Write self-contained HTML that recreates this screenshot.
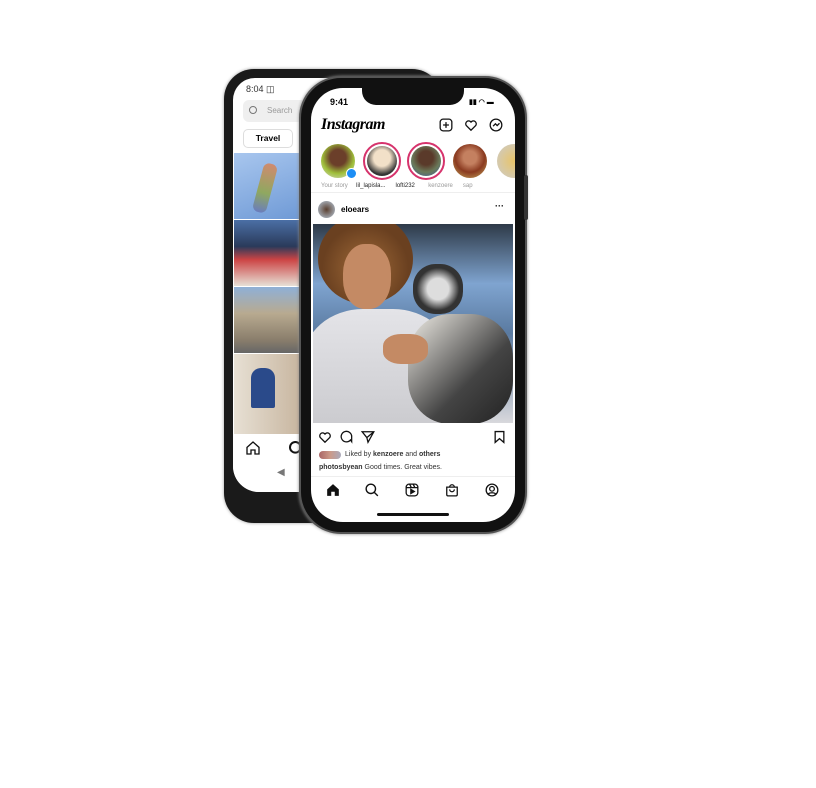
<!DOCTYPE html>
<html><head><style>
*{margin:0;padding:0;box-sizing:border-box}
body{width:816px;height:788px;background:#fff;position:relative;overflow:hidden;font-family:"Liberation Sans",sans-serif}
.abs{position:absolute}
</style></head><body>
<!-- back phone -->
<div class="abs" style="left:224px;top:69px;width:218px;height:454px;background:#1a1a1a;border-radius:30px;box-shadow:0 0 3px #999"></div>
<div class="abs" style="left:233px;top:78px;width:200px;height:414px;background:#fff;border-radius:22px 22px 26px 26px;overflow:hidden">
 <div class="abs" style="left:13px;top:6px;font-size:9px;color:#333">8:04 ◫</div>
 <div class="abs" style="left:10px;top:22px;width:190px;height:22px;background:#efefef;border-radius:6px;font-size:8px;color:#999;padding:6px 0 0 24px">Search</div>
 <div class="abs" style="left:16px;top:28px;width:8px;height:8px;border:1.5px solid #777;border-radius:50%"></div>
 <div class="abs" style="left:10px;top:51px;width:50px;height:19px;border:1px solid #ddd;border-radius:5px;font-size:8.5px;font-weight:bold;text-align:center;line-height:17px">Travel</div>
 <div class="abs" style="left:1px;top:75px;width:66px;height:66px;background:linear-gradient(160deg,#a8c6ee,#6f9ad6)"></div>
 <div class="abs" style="left:25px;top:85px;width:14px;height:50px;background:linear-gradient(#d08a70,#8fa860 60%,#6a7dbd);border-radius:6px;transform:rotate(15deg)"></div>
 <div class="abs" style="left:1px;top:142px;width:66px;height:66px;background:linear-gradient(#4b6fa5,#2a3a5a 40%,#c44 60%,#e6e0d6)"></div>
 <div class="abs" style="left:1px;top:209px;width:66px;height:66px;background:linear-gradient(#8fb0d6,#b8aa90 40%,#8a7e6c 80%,#666)"></div>
 <div class="abs" style="left:1px;top:276px;width:66px;height:80px;background:linear-gradient(90deg,#e7e0d4,#c8b6a0);"></div>
 <div class="abs" style="left:18px;top:290px;width:24px;height:40px;background:#2a4a8a;border-radius:10px 10px 2px 2px"></div>
 <div class="abs" style="left:0;top:357px;width:200px;height:60px;background:#fff"></div>
 <svg class="abs" style="left:12px;top:362px" width="16" height="16" viewBox="0 0 24 24" fill="none" stroke="#111" stroke-width="2"><path d="M3 11l9-8 9 8v10h-6v-6h-6v6H3z"/></svg>
 <svg class="abs" style="left:55px;top:362px" width="16" height="16" viewBox="0 0 24 24" fill="none" stroke="#111" stroke-width="3"><circle cx="11" cy="11" r="8"/></svg>
 <div class="abs" style="left:44px;top:389px;font-size:10px;color:#777">◀</div>
</div>
<!-- front phone -->
<div class="abs" style="left:299px;top:76px;width:228px;height:458px;background:#111;border-radius:42px;border:2px solid #555;box-shadow:0 0 3px #888"></div>
<div class="abs" style="left:524px;top:175px;width:4px;height:45px;background:#333;border-radius:2px"></div>
<div class="abs" style="left:311px;top:88px;width:204px;height:434px;background:#fff;border-radius:32px;overflow:hidden">
 <div class="abs" style="left:51px;top:0;width:102px;height:17px;background:#111;border-radius:0 0 14px 14px"></div>
 <div class="abs" style="left:19px;top:9px;font-size:9px;font-weight:bold">9:41</div>
 <div class="abs" style="left:158px;top:10px;font-size:7px;font-weight:bold">▮▮ ◠ ▬</div>
 <div class="abs" style="left:10px;top:28px;font-family:'Liberation Serif',serif;font-style:italic;font-weight:bold;font-size:16px;letter-spacing:-0.5px">Instagram</div>
 <svg class="abs" style="left:128px;top:30px" width="14" height="14" viewBox="0 0 24 24" fill="none" stroke="#111" stroke-width="2.2"><rect x="2" y="2" width="20" height="20" rx="5"/><path d="M12 7v10M7 12h10"/></svg>
 <svg class="abs" style="left:153px;top:30px" width="14" height="14" viewBox="0 0 24 24" fill="none" stroke="#111" stroke-width="2.2"><path d="M12 21l-8-8a5 5 0 0 1 8-6 5 5 0 0 1 8 6z"/></svg>
 <svg class="abs" style="left:178px;top:30px" width="14" height="14" viewBox="0 0 24 24" fill="none" stroke="#111" stroke-width="2.2"><circle cx="12" cy="12" r="10"/><path d="M7 14l4-4 3 3 4-4"/></svg>
 <div class="abs" style="left:10px;top:56px;width:34px;height:34px;border-radius:50%;background:radial-gradient(circle at 50% 40%,#6b3f2a 30%,#9fbf3a 60%,#ddd)"></div>
 <div class="abs" style="left:35px;top:80px;width:11px;height:11px;border-radius:50%;background:#1c8ef5;border:1.5px solid #fff"></div>
 <div class="abs" style="left:52px;top:54px;width:38px;height:38px;border-radius:50%;border:2px solid #d6336c;padding:2px"><div style="width:100%;height:100%;border-radius:50%;background:radial-gradient(circle at 50% 40%,#f2e0c8 35%,#333 70%)"></div></div>
 <div class="abs" style="left:96px;top:54px;width:38px;height:38px;border-radius:50%;border:2px solid #d6336c;padding:2px"><div style="width:100%;height:100%;border-radius:50%;background:radial-gradient(circle at 50% 40%,#5a3a2a 30%,#6a7a5a 60%,#3a5aa0)"></div></div>
 <div class="abs" style="left:142px;top:56px;width:34px;height:34px;border-radius:50%;background:radial-gradient(circle at 50% 40%,#c48060 25%,#8a3a20 55%,#c9b060)"></div>
 <div class="abs" style="left:186px;top:56px;width:34px;height:34px;border-radius:50%;background:radial-gradient(#e8c46a,#ccc)"></div>
 <div class="abs" style="left:10px;top:95px;font-size:6px;color:#999;width:210px;white-space:nowrap">Your story&nbsp;&nbsp;&nbsp;&nbsp;&nbsp;<span style="color:#222">lil_lapisla...</span>&nbsp;&nbsp;&nbsp;&nbsp;&nbsp;&nbsp;<span style="color:#222">lofti232</span>&nbsp;&nbsp;&nbsp;&nbsp;&nbsp;&nbsp;&nbsp;&nbsp;kenzoere&nbsp;&nbsp;&nbsp;&nbsp;&nbsp;&nbsp;sap</div>
 <div class="abs" style="left:0;top:104px;width:204px;height:1px;background:#eee"></div>
 <div class="abs" style="left:7px;top:113px;width:17px;height:17px;border-radius:50%;background:radial-gradient(#5a4030,#bcd)"></div>
 <div class="abs" style="left:30px;top:117px;font-size:8px;font-weight:bold">eloears</div>
 <div class="abs" style="left:184px;top:113px;font-size:9px;font-weight:bold">···</div>
 <div class="abs" style="left:2px;top:136px;width:200px;height:199px;background:linear-gradient(180deg,#2e3a48,#7fa4d0 30%,#5a7aa0 55%,#d8d8dc);overflow:hidden">
  <div class="abs" style="left:5px;top:-10px;width:95px;height:90px;border-radius:50%;background:radial-gradient(circle at 50% 60%,#a06a38,#6a4020 60%)"></div>
  <div class="abs" style="left:30px;top:20px;width:48px;height:65px;border-radius:45%;background:#c48a64"></div>
  <div class="abs" style="left:-10px;top:85px;width:150px;height:130px;border-radius:40% 40% 0 0;background:linear-gradient(#e4e4e8,#c8c8cc)"></div>
  <div class="abs" style="left:100px;top:40px;width:50px;height:50px;border-radius:45%;background:radial-gradient(#ddd 30%,#333 60%)"></div>
  <div class="abs" style="left:95px;top:90px;width:105px;height:110px;border-radius:40%;background:linear-gradient(135deg,#f2efe8,#444 60%,#222)"></div>
  <div class="abs" style="left:70px;top:110px;width:45px;height:30px;border-radius:40%;background:#c48a64"></div>
 </div>
 <svg class="abs" style="left:7px;top:342px" width="14" height="14" viewBox="0 0 24 24" fill="none" stroke="#111" stroke-width="2.2"><path d="M12 21l-8-8a5 5 0 0 1 8-6 5 5 0 0 1 8 6z"/></svg>
 <svg class="abs" style="left:29px;top:342px" width="14" height="14" viewBox="0 0 24 24" fill="none" stroke="#111" stroke-width="2.2"><path d="M20 20l-2-3a9 9 0 1 1 2-5z"/></svg>
 <svg class="abs" style="left:50px;top:342px" width="14" height="14" viewBox="0 0 24 24" fill="none" stroke="#111" stroke-width="2.2"><path d="M2 3h20L12 21l-2-8zM10 13l12-10"/></svg>
 <svg class="abs" style="left:182px;top:342px" width="13" height="14" viewBox="0 0 24 24" fill="none" stroke="#111" stroke-width="2.4"><path d="M4 2h16v20l-8-7-8 7z"/></svg>
 <div class="abs" style="left:8px;top:363px;width:22px;height:8px;background:linear-gradient(90deg,#a66,#c98,#aab);border-radius:4px"></div>
 <div class="abs" style="left:34px;top:363px;font-size:7px;color:#333">Liked by <b>kenzoere</b> and <b>others</b></div>
 <div class="abs" style="left:8px;top:376px;font-size:7px;color:#333"><b>photosbyean</b> Good times. Great vibes.</div>
 <div class="abs" style="left:0;top:388px;width:204px;height:1px;background:#eee"></div>
 <svg class="abs" style="left:15px;top:395px" width="14" height="14" viewBox="0 0 24 24" fill="#111"><path d="M2 11l10-9 10 9v11h-7v-7h-6v7H2z"/></svg>
 <svg class="abs" style="left:54px;top:395px" width="14" height="14" viewBox="0 0 24 24" fill="none" stroke="#111" stroke-width="2.4"><circle cx="10" cy="10" r="8"/><path d="M16 16l6 6"/></svg>
 <svg class="abs" style="left:94px;top:395px" width="14" height="14" viewBox="0 0 24 24" fill="none" stroke="#111" stroke-width="2.2"><rect x="2" y="2" width="20" height="20" rx="5"/><path d="M2 8h20M8 2l3 6M14 2l3 6"/><path d="M10 11v7l6-3.5z" fill="#111"/></svg>
 <svg class="abs" style="left:134px;top:395px" width="14" height="14" viewBox="0 0 24 24" fill="none" stroke="#111" stroke-width="2.2"><path d="M3 7h18v13a2 2 0 0 1-2 2H5a2 2 0 0 1-2-2z"/><path d="M8 7a4 4 0 0 1 8 0M8 11a4 4 0 0 0 8 0"/></svg>
 <svg class="abs" style="left:174px;top:395px" width="14" height="14" viewBox="0 0 24 24" fill="none" stroke="#111" stroke-width="2.2"><circle cx="12" cy="12" r="10"/><circle cx="12" cy="10" r="4"/><path d="M5 19a9 6 0 0 1 14 0"/></svg>
 <div class="abs" style="left:66px;top:425px;width:72px;height:3px;background:#111;border-radius:2px"></div>
</div>
</body></html>
